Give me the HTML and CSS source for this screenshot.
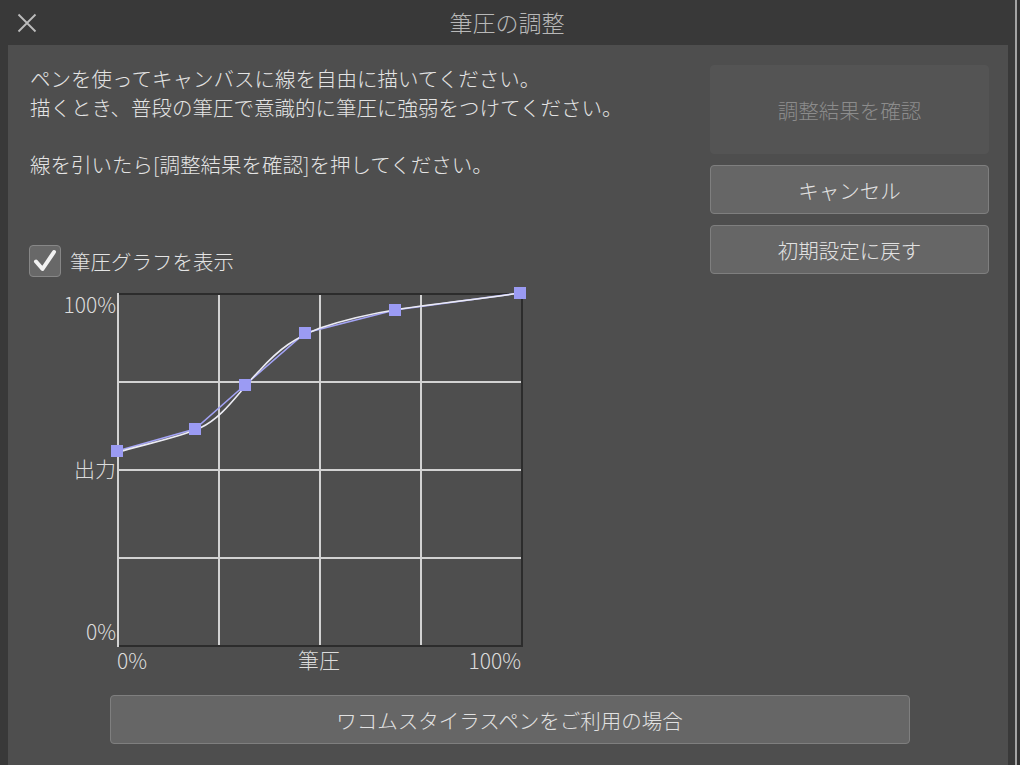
FILE: index.html
```html
<!DOCTYPE html>
<html lang="ja">
<head>
<meta charset="utf-8">
<title>筆圧の調整</title>
<link rel="stylesheet" href="styles.css">
</head>
<body>
<div class="app">
  <div class="window">
    <header class="titlebar">
      <button class="close" aria-label="閉じる">
        <svg width="20" height="20" viewBox="0 0 20 20"><path d="M1.5 1.5 L18.5 18.5 M18.5 1.5 L1.5 18.5" stroke="#bdbdbd" stroke-width="1.8" fill="none"/></svg>
      </button>
      <h1 class="title">筆圧の調整</h1>
      <div></div>
    </header>
    <main class="panel">
      <div class="top">
        <div class="left">
          <p class="desc">ペンを使ってキャンバスに線を自由に描いてください。<br>描くとき、普段の筆圧で意識的に筆圧に強弱をつけてください。<br><br>線を引いたら[調整結果を確認]を押してください。</p>
          <label class="check">
            <span class="box"><svg width="32" height="32" viewBox="0 0 32 32"><path d="M7 16.5 L13.5 24 L25 7" stroke="#f2f2f2" stroke-width="4" fill="none" stroke-linecap="round" stroke-linejoin="round"/></svg></span>
            <span class="check-label">筆圧グラフを表示</span>
          </label>
          <svg class="graph" width="470" height="390" viewBox="60 285 470 390">
            <g stroke="#d2d2d2" stroke-width="2" fill="none">
              <line x1="219" y1="294" x2="219" y2="646"/>
              <line x1="320" y1="294" x2="320" y2="646"/>
              <line x1="421" y1="294" x2="421" y2="646"/>
              <line x1="118" y1="382" x2="523" y2="382"/>
              <line x1="118" y1="470" x2="523" y2="470"/>
              <line x1="118" y1="558" x2="523" y2="558"/>
            </g>
            <g stroke="#2c2c2c" stroke-width="2" fill="none">
              <line x1="118" y1="294" x2="523" y2="294"/>
              <line x1="522" y1="294" x2="522" y2="647"/>
              <line x1="118" y1="646" x2="523" y2="646"/>
            </g>
            <line x1="118" y1="293" x2="118" y2="647" stroke="#d2d2d2" stroke-width="2"/>
            <polyline points="117,451 195,429 245,385 305,333 395,310 520,293" stroke="#a3a3f5" stroke-width="1.6" fill="none"/>
            <path d="M118,452 C150,443 180,437 200,428 C225,416 238,392 260,370 C280,348 295,338 320,328 C350,318 375,313 400,309 C440,303 480,299 520,293" stroke="#ececf4" stroke-width="1.6" fill="none"/>
            <g fill="#9b9bf3">
              <rect x="111" y="445" width="12" height="12"/>
              <rect x="189" y="423" width="12" height="12"/>
              <rect x="239" y="379" width="12" height="12"/>
              <rect x="299" y="327" width="12" height="12"/>
              <rect x="389" y="304" width="12" height="12"/>
              <rect x="514" y="287" width="12" height="12"/>
            </g>
            <g class="axis">
              <text x="116" y="313" text-anchor="end">100%</text>
              <text x="116" y="477" text-anchor="end">出力</text>
              <text x="116" y="640" text-anchor="end">0%</text>
              <text x="117" y="669">0%</text>
              <text x="319" y="668" text-anchor="middle">筆圧</text>
              <text x="521" y="669" text-anchor="end">100%</text>
            </g>
          </svg>
        </div>
        <div class="right">
          <button class="btn disabled" disabled>調整結果を確認</button>
          <button class="btn">キャンセル</button>
          <button class="btn">初期設定に戻す</button>
        </div>
      </div>
      <button class="btn wide">ワコムスタイラスペンをご利用の場合</button>
    </main>
  </div>
  <div class="edge"></div>
</div>
</body>
</html>
```
FILE: styles.css
```css
* { box-sizing: border-box; }
html, body { margin: 0; padding: 0; }
body {
  background: #393939;
  font-family: "Noto Sans CJK JP", "Noto Sans", sans-serif;
  font-weight: 300;
  color: #e2e2e2;
  overflow: hidden;
}
.app {
  display: flex;
  width: 1020px;
  height: 765px;
}
.window {
  width: 1014px;
  height: 765px;
  display: flex;
  flex-direction: column;
  background: #393939;
}
.edge {
  width: 6px;
  background: linear-gradient(to right, #393939 0 1px, #a3a3a3 1px 3px, #333333 3px);
}
.titlebar {
  height: 45px;
  display: grid;
  grid-template-columns: 1fr auto 1fr;
  align-items: center;
}
.close {
  justify-self: start;
  background: none;
  border: 0;
  padding: 0 0 0 17px;
  margin: 0;
  height: 20px;
  display: flex;
  align-items: center;
  cursor: pointer;
}
.close svg { display: block; }
.title {
  margin: 0;
  font-size: 23px;
  font-weight: 300;
  color: #b8b8b8;
  line-height: 44px;
  padding-bottom: 1px;
}
.panel {
  flex: 1;
  margin: 0 6px 0 8px;
  background: #4e4e4e;
  padding: 20px 19px 0 22px;
}
.top {
  display: flex;
  justify-content: space-between;
}
.left {
  display: flex;
  flex-direction: column;
}
.desc {
  margin: -1px 0 0 0;
  font-size: 20.5px;
  line-height: 28.5px;
  color: #e4e4e4;
}
.check {
  margin-top: 67px;
  display: flex;
  align-items: center;
  gap: 9px;
  height: 32px;
}
.box {
  width: 32px;
  height: 32px;
  border: 1px solid #878787;
  border-radius: 4px;
  background: #686868;
  display: flex;
  align-items: center;
  justify-content: center;
  margin-left: -1px;
}
.box svg { display: block; margin: -1px; }
.check-label {
  font-size: 20.5px;
  color: #e4e4e4;
}
.graph {
  display: block;
  margin: 8px 0 0 30px;
}
.axis text {
  font-family: "Noto Sans CJK JP", "Noto Sans", sans-serif;
  font-weight: 300;
  font-size: 21px;
  fill: #dcdcdc;
}
.right {
  width: 279px;
  display: flex;
  flex-direction: column;
  gap: 11px;
}
.btn {
  height: 49px;
  background: #666666;
  border: 1px solid #7f7f7f;
  border-radius: 4px;
  color: #e2e2e2;
  font-family: "Noto Sans CJK JP", "Noto Sans", sans-serif;
  font-weight: 300;
  font-size: 20.5px;
  padding: 0;
}
.btn.disabled {
  height: 89px;
  background: #545454;
  border-color: #545454;
  color: #8c8c8c;
}
.btn.wide {
  display: block;
  width: 800px;
  margin: 20px auto 0;
}
```
